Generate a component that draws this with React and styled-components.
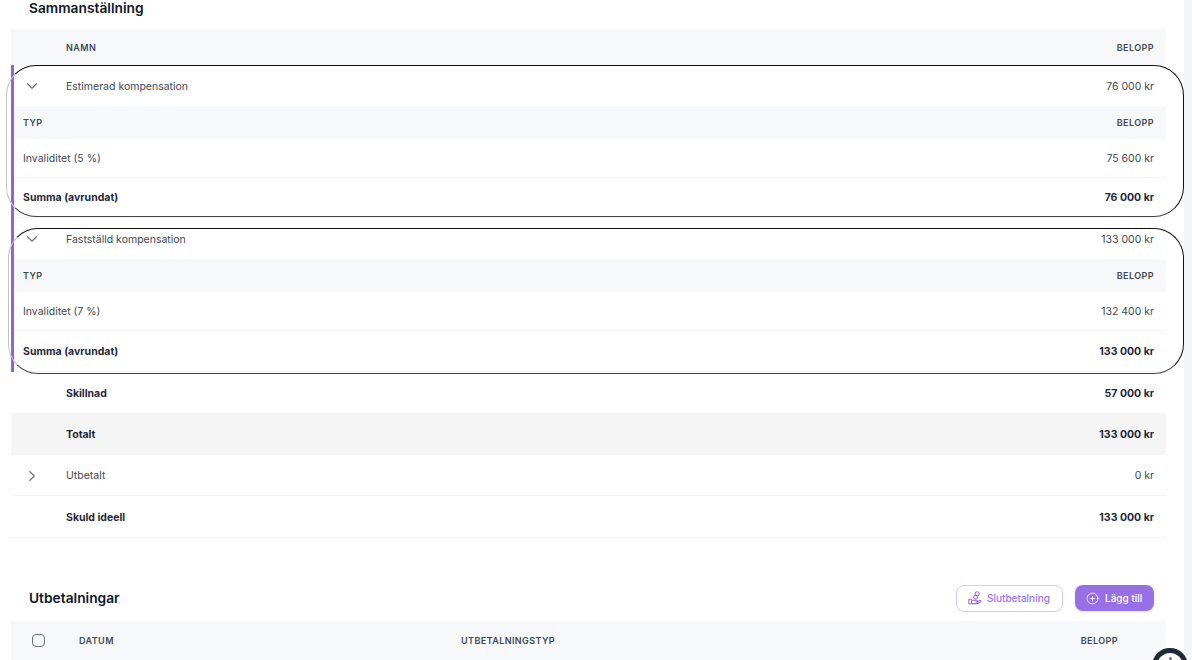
import React from "react";
import styled, { createGlobalStyle } from "styled-components";
import { ChevronDown, ChevronRight, CirclePlus } from "lucide-react";

const Global = createGlobalStyle`
  html, body { margin: 0; padding: 0; background: #fff; }
  body { font-family: Inter, "Liberation Sans", sans-serif; overflow: hidden; }
`;

const Page = styled.div`
  position: relative;
  display: flex;
  width: 1192px;
  height: 660px;
  overflow: hidden;
`;
const Main = styled.main`
  width: 1184px;
  padding: 0 18px 0 11px;
  box-sizing: border-box;
  background: #fff;
`;
const Strip = styled.div`
  flex: 1;
  background: #f4f5f7;
`;
const TopTitle = styled.h2`
  margin: 0;
  height: 29px;
  padding: 0 0 0 18px;
  font-size: 13.75px;
  line-height: 17px;
  font-weight: 600;
  color: #111827;
`;
const Row = styled.div`
  display: flex;
  align-items: center;
  height: ${p => p.$h}px;
  box-sizing: border-box;
  padding: ${p => p.$pt || 0}px 12px 0;
  background: ${p => p.$bg || "transparent"};
  border-bottom: ${p => (p.$line ? "1px solid #f3f4f6" : "none")};
  font-size: 10.5px;
  color: ${p => (p.$bold ? "#1f2937" : "#404854")};
  font-weight: ${p => (p.$bold ? 700 : 400)};
`;
const IconCell = styled.span`
  width: 43px;
  flex: none;
  display: flex;
  align-items: center;
  color: #6b7280;
`;
const Spacer = styled.span`
  width: 43px;
  flex: none;
`;
const Label = styled.span`
  flex: 1;
  white-space: nowrap;
`;
const Amount = styled.span`
  white-space: nowrap;
`;
const Head = styled.span`
  font-size: 9px;
  font-weight: 600;
  letter-spacing: 0.42px;
  color: #404854;
  text-transform: uppercase;
  white-space: nowrap;
  flex: ${p => (p.$grow ? 1 : "none")};
  width: ${p => (p.$w ? `${p.$w}px` : "auto")};
  margin-right: ${p => p.$mr || 0}px;
`;
const Expanded = styled.section`
  border-left: 3px solid #8b63e8;
  & > div {
    padding-left: 9px;
  }
`;
const SectionHead = styled.div`
  display: flex;
  align-items: center;
  height: 26px;
  margin: 47px 12px 10px 18px;
`;
const SectionTitle = styled.h2`
  margin: 0;
  flex: 1;
  font-size: 13.75px;
  font-weight: 600;
  color: #111827;
`;
const OutlineButton = styled.button`
  display: flex;
  align-items: center;
  gap: 5px;
  width: 107px;
  height: 27px;
  padding: 0 0 0 11px;
  margin-right: 12px;
  border: 1px solid #d8c8f8;
  border-radius: 8px;
  background: #fff;
  color: #9b72e8;
  font: 500 10px Inter, sans-serif;
`;
const SolidButton = styled.button`
  display: flex;
  align-items: center;
  gap: 6px;
  width: 79px;
  height: 26px;
  padding: 0 0 0 11px;
  border: none;
  border-radius: 8px;
  background: #9670e4;
  color: #fff;
  font: 500 10px Inter, sans-serif;
  box-shadow: 0 1px 3px rgba(120, 90, 220, 0.18);
`;
const CheckCell = styled.span`
  width: 47px;
  margin-left: 9px;
  flex: none;
  display: flex;
`;
const Check = styled.span`
  width: 11px;
  height: 11px;
  border: 1.5px solid #6b7280;
  border-radius: 4px;
`;
const Outline = styled.div`
  position: absolute;
  left: ${p => p.$l}px;
  top: ${p => p.$t}px;
  width: ${p => p.$w}px;
  height: ${p => p.$h}px;
  border: 1px solid #111;
  border-left-color: #c4c4c4;
  border-bottom-color: #444;
  border-radius: 30px;
  box-sizing: border-box;
  pointer-events: none;
`;
const ChatBubble = styled.div`
  position: absolute;
  left: 1152px;
  top: 648px;
  width: 36px;
  height: 36px;
  border-radius: 50%;
  border: 5px solid #1f2937;
  background: #fff;
  display: flex;
  justify-content: center;
  padding-top: 4px;
  box-sizing: border-box;
  &::after {
    content: "";
    width: 3px;
    height: 3px;
    border-radius: 50%;
    background: #6b7280;
  }
`;

const HandIcon = () => (
  <svg width="14" height="14" viewBox="0 0 14 14" fill="none" stroke="currentColor" strokeWidth="1.1">
    <circle cx="9.2" cy="2.8" r="2" />
    <circle cx="7.6" cy="6.2" r="1.9" />
    <rect x="0.8" y="8.2" width="2.6" height="4.6" rx="0.6" />
    <path d="M3.4 9.2h3.2l1.4.6h1.4c.8 0 .8 1.3 0 1.3H7.6M9.6 10.6l2.2-1c1-.4 1.6.6.8 1.2l-3 1.8H3.4" strokeLinejoin="round" />
  </svg>
);

const Breakdown = ({ title, total, pct, sum, lastH }) => (
  <>
    <Row $h={41} $pt={1}>
      <IconCell><ChevronDown size={18} strokeWidth={1.5} /></IconCell>
      <Label>{title}</Label>
      <Amount>{total}</Amount>
    </Row>
    <Row $h={33} $bg="#f7f8fa">
      <Head $grow>Typ</Head>
      <Head>Belopp</Head>
    </Row>
    <Row $h={39} $line>
      <Label>Invaliditet ({pct} %)</Label>
      <Amount>{sum}</Amount>
    </Row>
    <Row $h={lastH} $bold $line>
      <Label>Summa (avrundat)</Label>
      <Amount>{total}</Amount>
    </Row>
  </>
);

export default function App() {
  return (
    <Page>
      <Global />
      <Main>
        <TopTitle>Sammanställning</TopTitle>
        <Row $h={36} $bg="#f7f8fa">
          <Spacer />
          <Head $grow>Namn</Head>
          <Head>Belopp</Head>
        </Row>
        <Expanded>
          <Breakdown title="Estimerad kompensation" total="76 000 kr" pct="5" sum="75 600 kr" lastH={40} />
          <Breakdown title="Fastställd kompensation" total="133 000 kr" pct="7" sum="132 400 kr" lastH={41} />
        </Expanded>
        <Row $h={41} $bold $pt={1}>
          <Spacer />
          <Label>Skillnad</Label>
          <Amount>57 000 kr</Amount>
        </Row>
        <Row $h={42} $bold $bg="#f5f5f5">
          <Spacer />
          <Label>Totalt</Label>
          <Amount>133 000 kr</Amount>
        </Row>
        <Row $h={41} $line $pt={1}>
          <IconCell><ChevronRight size={18} strokeWidth={1.5} /></IconCell>
          <Label>Utbetalt</Label>
          <Amount>0 kr</Amount>
        </Row>
        <Row $h={42} $bold $line $pt={1}>
          <Spacer />
          <Label>Skuld ideell</Label>
          <Amount>133 000 kr</Amount>
        </Row>
        <SectionHead>
          <SectionTitle>Utbetalningar</SectionTitle>
          <OutlineButton><HandIcon />Slutbetalning</OutlineButton>
          <SolidButton><CirclePlus size={13} strokeWidth={1.5} />Lägg till</SolidButton>
        </SectionHead>
        <Row $h={39} $bg="#f7f8fa">
          <CheckCell><Check /></CheckCell>
          <Head $w={382}>Datum</Head>
          <Head $grow>Utbetalningstyp</Head>
          <Head $mr={36}>Belopp</Head>
        </Row>
      </Main>
      <Strip />
      <Outline $l={6} $t={65} $w={1178} $h={152} />
      <Outline $l={8} $t={228} $w={1176} $h={146} />
      <ChatBubble />
    </Page>
  );
}
